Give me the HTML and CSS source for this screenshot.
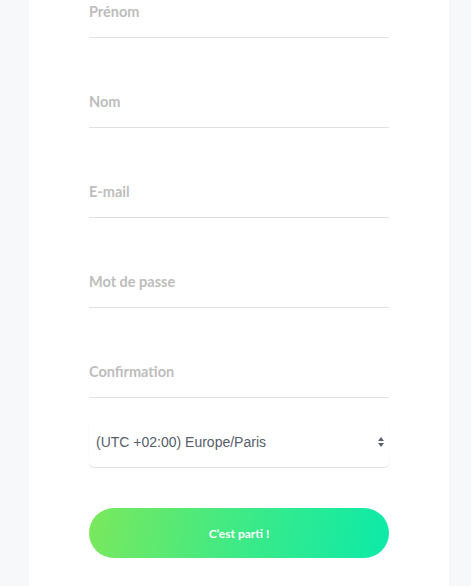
FILE: index.html
```html
<!DOCTYPE html>
<html lang="fr">
<head>
<meta charset="utf-8">
<link rel="stylesheet" href="styles.css">
</head>
<body>
<div class="card">
  <form class="form">
    <div class="field"><span class="label">Prénom</span></div>
    <div class="field"><span class="label">Nom</span></div>
    <div class="field"><span class="label">E-mail</span></div>
    <div class="field"><span class="label">Mot de passe</span></div>
    <div class="field field-last"><span class="label">Confirmation</span></div>
    <div class="select">
      <span class="select-text">(UTC +02:00) Europe/Paris</span>
      <svg class="arrows" width="8" height="12" viewBox="0 0 8 12"><path d="M4 1 L7 5 L1 5 Z" fill="#5b6373"/><path d="M1 7 L7 7 L4 11 Z" fill="#5b6373"/></svg>
    </div>
    <button class="btn" type="button">C’est parti !</button>
  </form>
</div>
</body>
</html>
```
FILE: styles.css
```css
html, body {
  margin: 0;
  padding: 0;
  background: #f7f8fa;
}
.card {
  margin-left: 29px;
  width: 420px;
  min-height: 586px;
  background: #ffffff;
}
.form {
  display: flex;
  flex-direction: column;
  width: 300px;
  margin-left: 60px;
}
.field {
  height: 37px;
  border-bottom: 1px solid #e1e1e1;
  margin-bottom: 52px;
  box-sizing: content-box;
}
.field-last {
  margin-bottom: 0;
}
.label {
  display: block;
  height: 24px;
  line-height: 24px;
  font-family: Lato, "Open Sans", sans-serif;
  font-weight: 700;
  font-size: 14.5px;
  color: #bdbdbd;
}
.select {
  margin-top: 19px;
  height: 50px;
  box-sizing: border-box;
  display: flex;
  align-items: center;
  justify-content: space-between;
  padding: 0 4px 0 7px;
  border-radius: 5px;
  background: #fff;
  box-shadow: 0 1px 1px rgba(0,0,0,0.12);
}
.select-text {
  font-family: "Liberation Sans", Arial, sans-serif;
  font-size: 14px;
  color: #555d6a;
}
.arrows {
  display: block;
}
.btn {
  margin-top: 41px;
  height: 50px;
  border: none;
  border-radius: 25px;
  background: linear-gradient(100deg, #7be85c 0%, #3eea86 50%, #0ceaa9 100%);
  color: #ffffff;
  font-family: Lato, "Open Sans", sans-serif;
  font-weight: 700;
  font-size: 12px;
  padding: 0;
  cursor: pointer;
}
```
